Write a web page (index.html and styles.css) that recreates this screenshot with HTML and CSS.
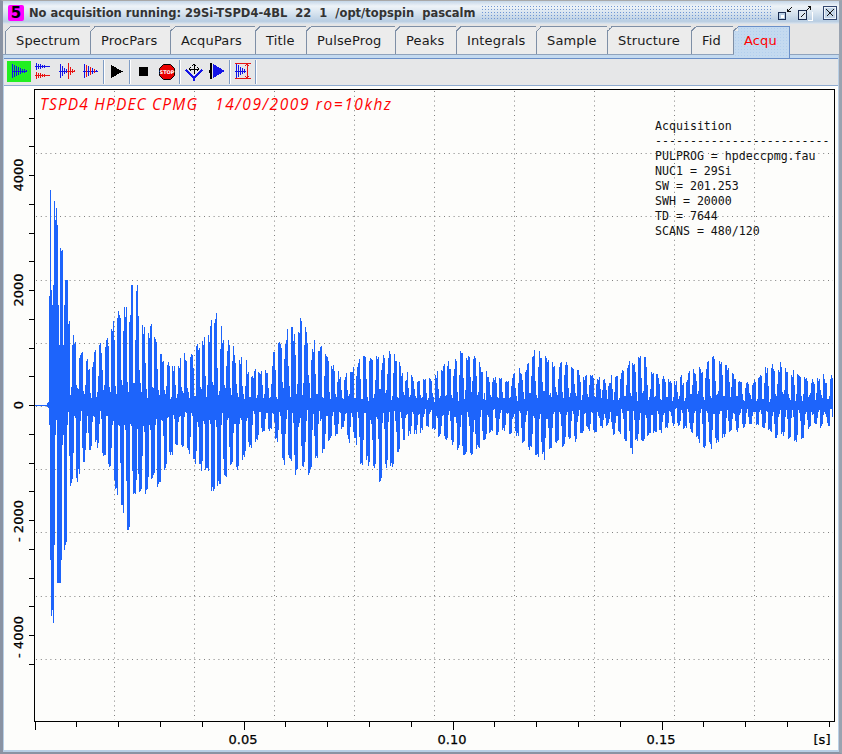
FILE: index.html
```html
<!DOCTYPE html>
<html lang="en">
<head>
<meta charset="utf-8">
<title>TopSpin acquisition</title>
<link rel="stylesheet" href="styles.css">
</head>
<body>
<div class="window">
  <header class="titlebar">
    <span class="badge">5</span>
    <span class="title">No acquisition running: 29Si-TSPD4-4BL  22  1  /opt/topspin  pascalm</span>
    <span class="dither"></span>
    <svg class="winbtn min" viewBox="0 0 16 16"><rect x="1.500" y="7.500" width="7" height="7" fill="#b8cfe5" stroke="#1a2c50"/><rect x="3.500" y="9.500" width="3" height="3" fill="#fff"/><path d="M14.500 2.500L10.500 6.500M10.500 3.500V6.500H13.500" fill="none" stroke="#111"/></svg>
    <svg class="winbtn max" viewBox="0 0 16 16"><rect x="1.500" y="5.500" width="8" height="9" fill="#dce7f2" stroke="#1a2c50"/><path d="M3.500 12.500L7.500 8.500M8.500 6.500L13.500 1.500M10.500 1.500H13.500V4.500" fill="none" stroke="#111"/><path d="M11 15.500H15.500M15.500 7V15" stroke="#fff"/></svg>
    <svg class="winbtn close" viewBox="0 0 14 14"><rect x="0.500" y="0.500" width="13" height="13" fill="#c3d5e7" stroke="#30456e"/><rect x="1.500" y="1.500" width="11" height="11" fill="none" stroke="#eef4fa"/><path d="M3.500 3.500L10.500 10.500M10.500 3.500L3.500 10.500" stroke="#111"/></svg>
  </header>

  <nav class="tabs">
    <span class="tab">Spectrum</span>
    <span class="tab">ProcPars</span>
    <span class="tab">AcquPars</span>
    <span class="tab">Title</span>
    <span class="tab">PulseProg</span>
    <span class="tab">Peaks</span>
    <span class="tab">Integrals</span>
    <span class="tab">Sample</span>
    <span class="tab">Structure</span>
    <span class="tab">Fid</span>
    <span class="tab active">Acqu</span>
  </nav>

  <main class="panel">
    <div class="toolbar">
      <button class="tool on"><svg viewBox="0 0 24 22"><path d="M5 4V18M7 5V17M9 6V16M11 7V15M13 8V14M15 9V13M17 9V13M19 10V12M5 11H20" stroke="#1414e6" fill="none"/></svg></button>
      <button class="tool"><svg viewBox="0 0 24 22"><path d="M5 3V10M7 4V9M9 4V9M11 5V8M13 5V8M15 6V7M4 6H19" stroke="#1414e6" fill="none"/><path d="M5 12V19M7 13V18M9 13V18M11 14V17M13 14V17M15 15V16M4 15H19" stroke="#e61414" fill="none"/></svg></button>
      <button class="tool"><svg viewBox="0 0 24 22"><path d="M5 4V18M7 6V16M9 8V14M11 9V13M4 11H12" stroke="#1414e6" fill="none"/><path d="M13 3V19M15 7V15M17 9V13M19 10V12M12 11H20" stroke="#e61414" fill="none"/></svg></button>
      <button class="tool"><svg viewBox="0 0 24 22"><path d="M5 4V18M9 6V16M13 8V14M17 10V12M4 11H19" stroke="#1414e6" fill="none"/><path d="M7 5V17M11 7V15M15 9V13" stroke="#e61414" fill="none"/></svg></button>
      <i class="sep"></i>
      <button class="tool"><svg viewBox="0 0 24 22"><path d="M6 5L18 11.500L6 18Z" fill="#000"/></svg></button>
      <i class="sep"></i>
      <button class="tool"><svg viewBox="0 0 24 22"><rect x="8" y="7" width="9" height="9" fill="#000"/></svg></button>
      <button class="tool"><svg class="smooth" viewBox="0 0 24 22"><path d="M8.500 4.500H15.500L19.500 8.500V15.500L15.500 19.500H8.500L4.500 15.500V8.500Z" fill="#e80000" stroke="#000"/><text class="stopword" x="12" y="14">STOP</text></svg></button>
      <i class="sep"></i>
      <button class="tool"><svg viewBox="0 0 24 22"><path d="M13 4V14M8 9H18M13 4L11 6M13 4L15 6M8 9L10 7M8 9L10 11M18 9L16 7M18 9L16 11" stroke="#000" fill="none"/><path d="M5 10L13 18L21 10M13 18V21" stroke="#1414e6" stroke-width="2" fill="none"/></svg></button>
      <button class="tool"><svg viewBox="0 0 24 22"><path d="M5 3V19H7V3ZM4 10H5V13H4Z" fill="#000"/><path d="M8 4V18L20 11Z" fill="#1414e6"/></svg></button>
      <i class="sep"></i>
      <button class="tool"><svg viewBox="0 0 24 22"><path d="M5 4V18M7 5V17M9 7V15M11 8V14M13 9V13M4 11H15" stroke="#1414e6" fill="none"/><path d="M4 3H20M4 18H20M16 4V18M14 6L16 4L18 6M14 16L16 18L18 16" stroke="#e61414" fill="none"/></svg></button>
      <i class="sep"></i>
    </div>

    <svg class="plot" viewBox="4 86 834 664" xmlns="http://www.w3.org/2000/svg">
      <g id="grid"></g>
      <path id="wave" class="wave" d=""></path>
      <path id="axes" class="axes" d=""></path>

      <text class="headline" x="40" y="110" textLength="157">TSPD4 HPDEC CPMG</text>
      <text class="headline" x="215" y="110" textLength="176">14/09/2009 ro=10khz</text>

      <text class="info" x="655" y="130">Acquisition</text>
      <text class="info" x="655" y="145">-------------------------</text>
      <text class="info" x="655" y="160">PULPROG = hpdeccpmg.fau</text>
      <text class="info" x="655" y="175">NUC1 = 29Si</text>
      <text class="info" x="655" y="190">SW = 201.253</text>
      <text class="info" x="655" y="205">SWH = 20000</text>
      <text class="info" x="655" y="220">TD = 7644</text>
      <text class="info" x="655" y="235">SCANS = 480/120</text>

      <text class="ylabel" transform="translate(23 175) rotate(-90)">4000</text>
      <text class="ylabel" transform="translate(23 290) rotate(-90)">2000</text>
      <text class="ylabel" transform="translate(23 405) rotate(-90)">0</text>
      <text class="ylabel" transform="translate(23 521) rotate(-90)">- 2000</text>
      <text class="ylabel" transform="translate(23 637) rotate(-90)">- 4000</text>

      <text class="xlabel" x="243" y="744">0.05</text>
      <text class="xlabel" x="452" y="744">0.10</text>
      <text class="xlabel" x="661" y="744">0.15</text>
      <text class="xlabel" x="822" y="744">[s]</text>
    </svg>
  </main>
</div>
<script src="script.js"></script>
</body>
</html>
```

FILE: styles.css
```css
* { box-sizing: border-box; }

html, body {
  margin: 0;
  padding: 0;
  width: 842px;
  height: 754px;
  overflow: hidden;
  background: #e4e4e4;
}

.window {
  width: 842px;
  height: 754px;
  display: flex;
  flex-direction: column;
  border-top: 1px solid #a8a8a8;
  border-left: 3px solid #8a93a3;
  border-right: 3px solid #9aa3b0;
  border-bottom: 2px solid #8a93a3;
  font-family: "DejaVu Sans", sans-serif;
}

/* title bar */
.titlebar {
  height: 23px;
  flex: none;
  display: flex;
  align-items: center;
  padding-left: 5px;
  background: linear-gradient(#c4d6e8 0, #eef3f8 22%, #d9e5f0 50%, #b8cde2 88%, #dfe6ee 100%);
}

.badge {
  width: 16px;
  height: 16px;
  flex: none;
  background: #ff00ff;
  border-radius: 2px;
  font-size: 15px;
  font-weight: 700;
  line-height: 16px;
  text-align: center;
  color: #000;
}

.title {
  margin-left: 5px;
  flex: none;
  white-space: pre;
  font-size: 11.500px;
  font-weight: 700;
  color: #333;
}

.dither {
  flex: none;
  width: 292px;
  height: 15px;
  margin-left: 5px;
  background-image: radial-gradient(#6f96d4 0.7px, transparent 0.8px);
  background-size: 3px 3px;
}

.winbtn { flex: none; width: 16px; height: 16px; display: block; shape-rendering: crispEdges; }
.min { margin-left: 4px; }
.max { margin-left: 4px; }
.close { width: 14px; height: 14px; margin-left: 10px; }

/* tabs */
.tabs {
  height: 31px;
  flex: none;
  display: flex;
  align-items: flex-start;
  padding: 2px 0 0 2px;
  background: #e5e5e5;
  border-bottom: 1px solid #8fa3bd;
  position: relative;
  z-index: 1;
}

.tab {
  position: relative;
  flex: none;
  height: 28px;
  padding: 5px 0 0 10px;
  font-size: 13px;
  letter-spacing: 0.15px;
  line-height: 18px;
  color: #1a1a1a;
  background: #ececec;
  border-top: 1px solid #7e8fa6;
  border-right: 1px solid #7e8fa6;
  white-space: nowrap;
}

.tab:nth-child(1) { width: 86px; border-left: 1px solid #7e8fa6; }
.tab:nth-child(2) { width: 80px; }
.tab:nth-child(3) { width: 85px; }
.tab:nth-child(4) { width: 51px; }
.tab:nth-child(5) { width: 89px; }
.tab:nth-child(6) { width: 61px; }
.tab:nth-child(7) { width: 80px; }
.tab:nth-child(8) { width: 71px; }
.tab:nth-child(9) { width: 84px; }
.tab:nth-child(10) { width: 42px; }
.tab:nth-child(11) { width: 56px; }

.tab::before {
  content: "";
  position: absolute;
  top: -1px;
  left: -1px;
  width: 5px;
  height: 5px;
  background: linear-gradient(135deg, #e5e5e5 50%, #7e8fa6 50%, #7e8fa6 62%, #ececec 62%);
}

.tab.active {
  height: 32px;
  color: #ff0000;
  border-color: #6a8fc8;
  background-color: #c4daf0;
  background-image: radial-gradient(#b3cfee 0.7px, transparent 0.8px);
  background-size: 3px 3px;
  z-index: 2;
}

/* content panel */
.panel {
  flex: 1;
  min-height: 0;
  display: flex;
  flex-direction: column;
  padding-top: 3px;
  background: #c4daf0;
  border-left: 1px solid #b8cfe5;
  border-right: 1px solid #b8cfe5;
  border-bottom: 2px solid #b8cfe5;
}

.toolbar {
  height: 28px;
  flex: none;
  display: flex;
  align-items: center;
  padding-left: 3px;
  background: #e6e7e8;
  border-top: 1px solid #6a8fc8;
  border-bottom: 1px solid #8fabd0;
}

.tool {
  width: 24px;
  height: 21px;
  flex: none;
  align-self: flex-start;
  margin: 2px 0 0;
  padding: 0;
  border: 0;
  background: transparent;
  display: block;
}

.tool svg {
  width: 24px;
  height: 22px;
  margin-top: -1px;
  display: block;
  overflow: visible;
  shape-rendering: crispEdges;
}

.tool svg.smooth { shape-rendering: auto; }
.tool.on { background: #22ee22; }

.sep {
  width: 2px;
  height: 24px;
  flex: none;
  border-left: 1px solid #7f9cc4;
  border-right: 1px solid #fff;
}

.stopword {
  font-family: "DejaVu Sans", sans-serif;
  font-size: 5px;
  font-weight: 700;
  fill: #fff;
  text-anchor: middle;
}

/* plot */
.plot {
  width: 834px;
  height: 664px;
  flex: none;
  display: block;
  background: #fdfdfb;
}

.gridline {
  stroke: #808080;
  stroke-width: 1;
  stroke-dasharray: 1 3.800;
  fill: none;
}

.wave {
  stroke: #1d64fb;
  stroke-width: 1;
  fill: none;
  shape-rendering: crispEdges;
}

.axes {
  stroke: #000;
  stroke-width: 1;
  fill: none;
  shape-rendering: crispEdges;
}

.headline {
  font-family: "Open Sans", "DejaVu Sans", sans-serif;
  font-style: italic;
  font-weight: 400;
  font-size: 15.500px;
  fill: #f00;
}

.info {
  font-family: "DejaVu Sans Mono", monospace;
  font-size: 11.600px;
  fill: #111;
}

.ylabel, .xlabel {
  font-family: "DejaVu Sans", sans-serif;
  font-size: 13px;
  fill: #000;
  stroke: #000;
  stroke-width: 0.250px;
  text-anchor: middle;
}
```

FILE: script.js
```js
// Draws the plot: grid, axes and the CPMG free induction decay.
(function () {
  var ZERO = 405, X1 = 832;

  // [x, amplitude above zero, amplitude below zero] in plot pixels
  var ENVELOPE = [
    [48, 6, 6], [67, 125, 145], [70, 100, 105], [73, 88, 98], [78, 60, 80],
    [85, 46, 55], [95, 54, 44], [102, 72, 52], [108, 90, 76], [115, 108, 96], [122, 122, 122],
    [130, 120, 126], [137, 122, 124], [145, 96, 120], [155, 70, 86], [165, 52, 68], [175, 46, 49],
    [185, 49, 42], [195, 64, 72], [205, 88, 86], [215, 96, 94], [225, 82, 92], [235, 60, 66],
    [245, 46, 58], [258, 32, 34], [270, 46, 28], [280, 66, 54], [290, 84, 70], [300, 96, 80],
    [310, 76, 70], [322, 56, 49], [335, 36, 34], [345, 30, 28], [355, 40, 48], [365, 56, 66],
    [375, 62, 76], [385, 60, 78], [395, 52, 56], [405, 34, 38], [415, 24, 30], [430, 28, 26],
    [445, 40, 42], [460, 60, 54], [470, 56, 58], [482, 38, 42], [495, 28, 28], [505, 26, 24],
    [520, 40, 36], [535, 56, 50], [545, 58, 52], [555, 46, 48], [565, 44, 42], [580, 34, 32],
    [595, 32, 24], [605, 24, 21], [615, 32, 28], [625, 44, 38], [640, 52, 52], [650, 42, 34],
    [665, 28, 24], [675, 22, 20], [690, 32, 30], [705, 44, 40], [720, 46, 42], [730, 34, 30],
    [745, 26, 22], [755, 24, 19], [770, 40, 30], [785, 40, 38], [800, 30, 34], [815, 28, 22],
    [832, 28, 18]
  ];

  // The first echo, column by column: x -> [above, below]
  var FIRST_ECHO = {
    49: [109, 20], 50: [215, 155], 51: [115, 211], 52: [100, 205], 53: [120, 218], 54: [204, 140],
    55: [185, 30], 56: [197, 15], 57: [180, 178], 58: [100, 178], 59: [60, 178], 60: [157, 178],
    61: [154, 155], 62: [155, 40], 63: [60, 30], 64: [100, 145], 65: [125, 140], 66: [125, 137],
    67: [125, 20]
  };

  var seed = 20090914;
  function rnd() {
    seed = (seed * 1664525 + 1013904223) % 4294967296;
    return seed / 4294967296;
  }

  function envelopeAt(x) {
    for (var i = 1; i < ENVELOPE.length; i++) {
      if (x <= ENVELOPE[i][0]) {
        var a = ENVELOPE[i - 1], b = ENVELOPE[i];
        var t = (x - a[0]) / (b[0] - a[0]);
        return [a[1] + (b[1] - a[1]) * t, a[2] + (b[2] - a[2]) * t];
      }
    }
    return [0, 0];
  }

  // Height of a tooth at a position cos value s, as a share of the envelope.
  function tooth(s, peak) {
    if (s > -0.05) return peak * (0.88 + 0.12 * rnd());
    if (s > -0.6) return 0.24 + rnd() * 0.4;
    return 0.04 + rnd() * 0.18;
  }

  function wavePath() {
    var d = "M35 405.500H48M47.500 403V407M48.500 402V408";
    var phase = 0, up = 0.8, down = 0.8, last = -1;
    for (var x = 49; x <= X1; x++) {
      phase += 1 / (6.3 + Math.sin(x / 37) * 0.35) + (rnd() - 0.5) * 0.04;
      var n = Math.floor(phase), c = Math.cos(2 * Math.PI * phase);
      if (n !== last) {
        last = n;
        up = 0.72 + rnd() * 0.28;
        down = 0.72 + rnd() * 0.28;
      }
      var top, bottom;
      if (FIRST_ECHO[x]) {
        top = FIRST_ECHO[x][0];
        bottom = FIRST_ECHO[x][1];
      } else {
        var env = envelopeAt(x);
        top = env[0] * tooth(c, up) + 1 + rnd() * 5;
        bottom = env[1] * tooth(-c, down) + 1 + rnd() * 5;
      }
      d += "M" + (x + 0.5) + " " + Math.round(ZERO - top) + "V" + Math.round(ZERO + bottom);
    }
    return d;
  }

  function drawGrid() {
    var SVG = "http://www.w3.org/2000/svg", host = document.getElementById("grid");
    function line(x1, y1, x2, y2) {
      var el = document.createElementNS(SVG, "line");
      el.setAttribute("class", "gridline");
      el.setAttribute("x1", x1); el.setAttribute("y1", y1);
      el.setAttribute("x2", x2); el.setAttribute("y2", y2);
      host.appendChild(el);
    }
    for (var gx = 114.5; gx < 830; gx += 80) line(gx, 91, gx, 720);
    for (var i = 1; i <= 9; i++) {
      var gy = Math.round(90 + i * 63.2) + 0.5;
      line(36, gy, 833, gy);
    }
  }

  function axesPath() {
    var d = "M34.500 89.500H834.500V721.500H34.500Z";
    for (var i = -2; i <= 17; i++) {
      var y = Math.round(175 + i * 28.75) + 0.5;
      if (y > 92 && y < 718) d += "M29 " + y + "H34";
    }
    for (var t = 0; t <= 19; t++) {
      var x = Math.round(34.5 + t * 41.8) + 0.5;
      d += "M" + x + " 722V" + (t % 5 === 0 ? 730 : 727);
    }
    return d;
  }

  drawGrid();
  document.getElementById("wave").setAttribute("d", wavePath());
  document.getElementById("axes").setAttribute("d", axesPath());
})();
```
